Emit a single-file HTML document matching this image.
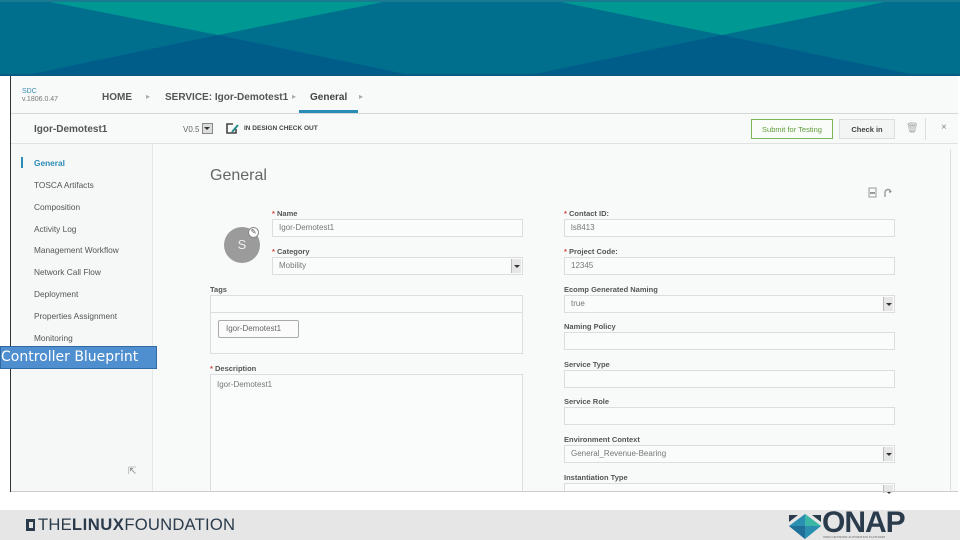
<!DOCTYPE html>
<html><head><meta charset="utf-8">
<style>
*{margin:0;padding:0;box-sizing:border-box}
body{width:960px;height:540px;position:relative;overflow:hidden;background:#fff;font-family:"Liberation Sans",sans-serif;color:#555}
.a{position:absolute}
.lbl{position:absolute;font-size:7.5px;font-weight:bold;color:#555}
.lbl b{color:#d0463c;font-weight:bold}
.inp{position:absolute;height:18px;border:1px solid #dcdedd;background:#fafbfb;font-size:8px;color:#777;padding:3px 0 0 6px}
.sel{position:absolute;right:1px;top:1px;width:10px;height:14px;background:#e6e6e6;border-left:1px solid #bbb}
.sel:after{content:"";position:absolute;left:2px;top:6px;border:3px solid transparent;border-top:3px solid #333}
.nav{position:absolute;left:34px;font-size:8.3px;color:#555}
</style></head><body>
<svg class="a" style="left:0;top:0" width="960" height="76">
<rect width="960" height="76" fill="#006f8e"/>
<polygon points="40,0 393,0 218,35" fill="#009893"/>
<polygon points="551,0 894,0 722,35" fill="#009893"/>
<polygon points="27,75 410,75 218,35" fill="#005c89"/>
<polygon points="530,75 915,75 722,35" fill="#005c89"/>
<rect width="960" height="2" fill="#197a92"/>
<rect y="74" width="960" height="2" fill="#0a5a80"/>
</svg>
<div class="a" style="left:10px;top:76px;width:948px;height:416px;background:#f8faf9;border-left:1px solid #333"></div>
<div class="a" style="left:11px;top:113px;width:947px;height:1px;background:#d5d8d7"></div>
<div class="a" style="left:22px;top:88px;font-size:7px;color:#3a8db8;line-height:8px">SDC<br><span style="color:#777">v.1806.0.47</span></div>
<div class="a" style="left:102px;top:92px;font-size:10px;font-weight:bold;color:#555">HOME</div>
<div class="a" style="left:146px;top:92px;font-size:8px;color:#aaa">▸</div>
<div class="a" style="left:165px;top:92px;font-size:10px;font-weight:bold;color:#555">SERVICE: Igor-Demotest1</div>
<div class="a" style="left:292px;top:92px;font-size:8px;color:#aaa">▸</div>
<div class="a" style="left:310px;top:92px;font-size:10px;font-weight:bold;color:#444">General</div>
<div class="a" style="left:359px;top:92px;font-size:8px;color:#aaa">▸</div>
<div class="a" style="left:299px;top:110px;width:59px;height:3px;background:#2a8bb5"></div>
<div class="a" style="left:11px;top:143px;width:947px;height:1px;background:#e0e2e1"></div>
<div class="a" style="left:34px;top:124px;font-size:10px;font-weight:bold;color:#555">Igor-Demotest1</div>
<div class="a" style="left:183px;top:125px;font-size:8px;color:#666">V0.5</div>
<div class="a" style="left:202px;top:123px;width:11px;height:11px;border:1px solid #888;background:#ddd"></div>
<div class="a" style="left:204px;top:127px;border:3px solid transparent;border-top:3px solid #333"></div>
<svg class="a" style="left:225px;top:122px" width="16" height="13"><path d="M8 2H2v9h9V7" stroke="#444" stroke-width="1.6" fill="none"/><path d="M7 10L13 3" stroke="#2a8c8c" stroke-width="2"/></svg>
<div class="a" style="left:244px;top:125px;font-size:6.5px;font-weight:bold;color:#444">IN DESIGN CHECK OUT</div>
<div class="a" style="left:751px;top:119px;width:82px;height:20px;border:1px solid #7bb55a;background:#fafcf9;font-size:7.5px;color:#5e9e3a;text-align:center;padding-top:5px">Submit for Testing</div>
<div class="a" style="left:839px;top:119px;width:56px;height:20px;border:1px solid #ddd;background:#f3f4f4;font-size:7.5px;font-weight:bold;color:#444;text-align:center;padding-top:5px">Check in</div>
<div class="a" style="left:906px;top:123px;font-size:10px;color:#aaa">🗑</div>
<div class="a" style="left:925px;top:118px;width:1px;height:22px;background:#ddd"></div>
<div class="a" style="left:941px;top:122px;font-size:10px;color:#888">×</div>
<div class="a" style="left:11px;top:144px;width:142px;height:348px;background:#f6f7f7;border-right:1px solid #e6e8e7"></div>
<div class="a" style="left:21px;top:157px;width:2px;height:11px;background:#2a8bb5"></div>
<div class="nav" style="top:158px;color:#2a8bb5;font-weight:bold">General</div>
<div class="nav" style="top:180px">TOSCA Artifacts</div>
<div class="nav" style="top:202px">Composition</div>
<div class="nav" style="top:224px">Activity Log</div>
<div class="nav" style="top:245px">Management Workflow</div>
<div class="nav" style="top:267px">Network Call Flow</div>
<div class="nav" style="top:289px">Deployment</div>
<div class="nav" style="top:311px">Properties Assignment</div>
<div class="nav" style="top:333px">Monitoring</div>
<div class="a" style="left:0;top:346px;width:157px;height:23px;background:#4f8fcf;border:1px solid #2f6aa5;color:#fff;font-family:'DejaVu Sans',sans-serif;font-size:14px;padding-top:2px;white-space:nowrap">Controller Blueprint</div>
<div class="a" style="left:128px;top:466px;font-size:10px;color:#888">⇱</div>
<div class="a" style="left:210px;top:167px;font-size:16px;color:#666">General</div>
<svg class="a" style="left:868px;top:187px" width="28" height="12"><rect x="1" y="1" width="7" height="9" fill="none" stroke="#999"/><rect x="2" y="5" width="5" height="2" fill="#999"/><path d="M17 10V6a3 3 0 0 1 6 -1" stroke="#999" stroke-width="1.4" fill="none"/><path d="M21 2l3 3-3 1z" fill="#999"/></svg>
<div class="a" style="left:224px;top:227px;width:36px;height:36px;border-radius:50%;background:#9b9b9b;color:#eee;font-size:13px;text-align:center;line-height:36px">S</div>
<div class="a" style="left:248px;top:227px;width:11px;height:11px;border-radius:50%;background:#fff;border:1px solid #888;font-size:7px;text-align:center;line-height:9px;color:#444">✎</div>
<div class="lbl" style="left:272px;top:209px"><b>*</b> Name</div>
<div class="inp" style="left:272px;top:219px;width:251px">Igor-Demotest1</div>
<div class="lbl" style="left:272px;top:247px"><b>*</b> Category</div>
<div class="inp" style="left:272px;top:257px;width:251px">Mobility<div class="sel"></div></div>
<div class="lbl" style="left:210px;top:285px">Tags</div>
<div class="a" style="left:210px;top:295px;width:313px;height:59px;border:1px solid #dcdedd;background:#fafbfb"></div>
<div class="a" style="left:210px;top:312px;width:313px;height:1px;background:#dcdedd"></div>
<div class="a" style="left:218px;top:320px;width:81px;height:18px;border:1px solid #aaa;border-radius:2px;background:#fbfbfb;font-size:8px;color:#666;padding:3px 0 0 7px">Igor-Demotest1</div>
<div class="lbl" style="left:210px;top:364px"><b>*</b> Description</div>
<div class="a" style="left:210px;top:374px;width:313px;height:118px;border:1px solid #dcdedd;background:#fafbfb;font-size:8px;color:#777;padding:5px 6px">Igor-Demotest1</div>
<div class="lbl" style="left:564px;top:209px"><b>*</b> Contact ID:</div>
<div class="inp" style="left:564px;top:219px;width:331px">ls8413</div>
<div class="lbl" style="left:564px;top:247px"><b>*</b> Project Code:</div>
<div class="inp" style="left:564px;top:257px;width:331px">12345</div>
<div class="lbl" style="left:564px;top:285px">Ecomp Generated Naming</div>
<div class="inp" style="left:564px;top:295px;width:331px">true<div class="sel"></div></div>
<div class="lbl" style="left:564px;top:322px">Naming Policy</div>
<div class="inp" style="left:564px;top:332px;width:331px"></div>
<div class="lbl" style="left:564px;top:360px">Service Type</div>
<div class="inp" style="left:564px;top:370px;width:331px"></div>
<div class="lbl" style="left:564px;top:397px">Service Role</div>
<div class="inp" style="left:564px;top:407px;width:331px"></div>
<div class="lbl" style="left:564px;top:435px">Environment Context</div>
<div class="inp" style="left:564px;top:445px;width:331px">General_Revenue-Bearing<div class="sel"></div></div>
<div class="lbl" style="left:564px;top:473px">Instantiation Type</div>
<div class="inp" style="left:564px;top:483px;width:331px;height:9px;border-bottom:none"><div class="sel" style="height:8px"></div></div>
<div class="a" style="left:950px;top:150px;width:7px;height:340px;border-left:1px solid #ddd"></div>
<div class="a" style="left:11px;top:491px;width:947px;height:1px;background:#ccc"></div>
<div class="a" style="left:0;top:510px;width:960px;height:30px;background:#e6e6e6"></div>
<div class="a" style="left:26px;top:519px;width:9px;height:12px;background:#2a3b4c"></div>
<div class="a" style="left:29px;top:522px;width:4px;height:6px;background:#e6e6e6"></div>
<div class="a" style="left:38px;top:515px;font-size:17px;color:#2a3b4c;letter-spacing:0.2px;white-space:nowrap;transform:scaleX(0.98);transform-origin:left">THE<b style="letter-spacing:0.5px">LINUX</b>FOUNDATION</div>
<svg class="a" style="left:788px;top:513px" width="34" height="27"><polygon points="17,1 33,13 17,26 1,13" fill="#2a8fb0"/><polygon points="17,1 33,13 17,13" fill="#3bb7a6"/><polygon points="1,13 17,13 17,26" fill="#1f6f99"/><polygon points="1,2 10,2 1,9" fill="#2a3b4c"/><polygon points="33,2 24,2 33,9" fill="#2a3b4c"/></svg>
<div class="a" style="left:822px;top:506px;font-size:30px;font-weight:bold;color:#2a3b4c;letter-spacing:-1px">ONAP</div>
<div class="a" style="left:823px;top:535px;font-size:3px;color:#666">OPEN NETWORK AUTOMATION PLATFORM</div>
</body></html>
